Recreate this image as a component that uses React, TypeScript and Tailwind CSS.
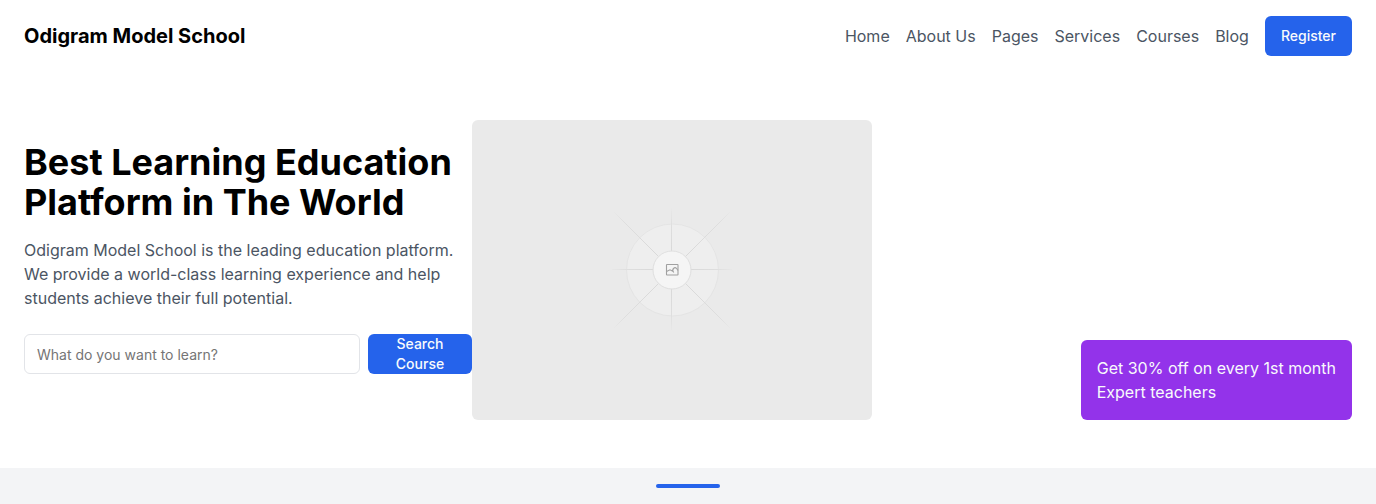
const links = ["Home", "About Us", "Pages", "Services", "Courses", "Blog"];

function Placeholder() {
  return (
    <svg
      viewBox="0 0 400 300"
      role="img"
      aria-label="Students learning"
      className="h-[300px] w-[400px] shrink-0 rounded-md bg-[#eaeaea]"
      fill="none"
    >
      <defs>
        <radialGradient id="ray" gradientUnits="userSpaceOnUse" cx="200" cy="150" r="64">
          <stop offset="0.3" stopColor="#d9d9d9" />
          <stop offset="0.7" stopColor="#dedede" />
          <stop offset="1" stopColor="#eaeaea" />
        </radialGradient>
        <radialGradient id="diagonal" gradientUnits="userSpaceOnUse" cx="200" cy="150" r="84">
          <stop offset="0.25" stopColor="#d9d9d9" />
          <stop offset="0.8" stopColor="#dedede" />
          <stop offset="1" stopColor="#eaeaea" />
        </radialGradient>
      </defs>
      <circle cx="200.5" cy="150" r="46" fill="#eeeeee" stroke="#e4e4e4" />
      <path d="M199.500 88V210M140 149.500H260" stroke="url(#ray)" />
      <path d="M142 92L258 208M258 92L142 208" stroke="url(#diagonal)" />
      <circle cx="200" cy="150" r="19" fill="#f5f5f5" stroke="#dfdfdf" />
      <g stroke="#a0a0a0" strokeWidth="1.100">
        <rect x="194.500" y="144.500" width="11.500" height="10.500" rx="0.500" />
        <path d="M194.500 151.500L198 149.800L200.800 151.200M206 150.500L204.500 148.300Q203 147 201.500 148.500Q199.800 150.300 201.800 152.500" />
      </g>
    </svg>
  );
}

export default function App() {
  return (
    <div className="bg-white font-[Inter,sans-serif] text-base text-black">
      <header className="flex items-center justify-between px-6 py-4">
        <div className="text-xl font-bold">Odigram Model School</div>
        <nav className="flex items-center gap-4 text-[#4b5563]">
          {links.map((label) => (
            <a key={label} href="#">
              {label}
            </a>
          ))}
          <button
            type="button"
            className="h-10 rounded-md bg-[#2563eb] px-4 text-sm font-medium text-[#f8fafc]"
          >
            Register
          </button>
        </nav>
      </header>
      <main>
        <section className="flex items-center px-6 py-12">
          <div className="w-full max-w-md">
            <h1 className="mb-4 text-4xl font-bold">
              Best Learning Education Platform in The World
            </h1>
            <p className="mb-6 text-[#4b5563]">
              Odigram Model School is the leading education platform. We provide a world-class
              learning experience and help students achieve their full potential.
            </p>
            <form className="mb-6 flex gap-2" onSubmit={(e) => e.preventDefault()}>
              <input
                type="text"
                aria-label="What do you want to learn?"
                placeholder="What do you want to learn?"
                className="h-10 min-w-0 flex-1 rounded-md border border-[#e2e4e8] bg-white px-3 py-2 text-sm placeholder:text-[#757575]"
              />
              <button
                type="submit"
                className="flex h-10 w-26 items-center justify-center rounded-md bg-[#2563eb] px-4 text-sm font-medium text-[#f8fafc]"
              >
                Search Course
              </button>
            </form>
          </div>
          <Placeholder />
          <aside className="ml-auto self-end rounded-md bg-[#9333ea] p-4 text-[#f8fafc]">
            <p>Get 30% off on every 1st month</p>
            <p>Expert teachers</p>
          </aside>
        </section>
        <section className="bg-[#f3f4f6] py-4">
          <div className="mx-auto h-1 w-16 rounded-full bg-[#2563eb]" />
        </section>
      </main>
    </div>
  );
}
